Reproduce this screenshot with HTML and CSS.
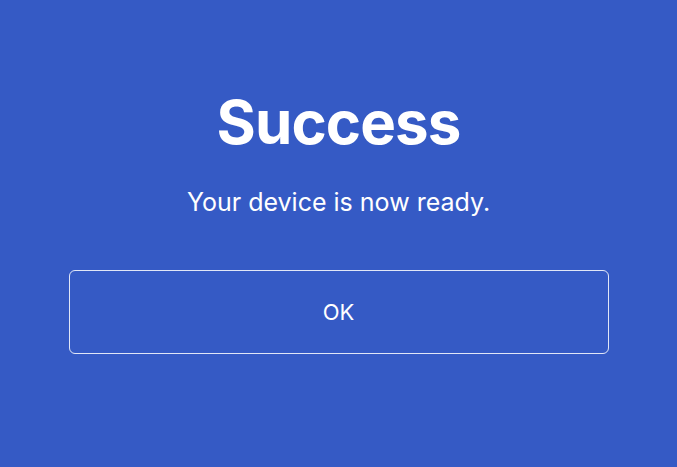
FILE: index.html
```html
<!DOCTYPE html>
<html>
<head>
<meta charset="utf-8">
<link rel="stylesheet" href="styles.css">
</head>
<body>
<main class="dialog">
  <h1 class="title">Success</h1>
  <p class="message">Your device is now ready.</p>
  <button class="ok-button">OK</button>
</main>
</body>
</html>
```
FILE: styles.css
```css
html, body {
  margin: 0;
  padding: 0;
  height: 100%;
}
body {
  background: #355ac5;
  color: #ffffff;
  font-family: Inter, "Noto Sans", sans-serif;
  display: flex;
  justify-content: center;
}
.dialog {
  width: 540px;
  display: flex;
  flex-direction: column;
  align-items: stretch;
  padding-top: 84px;
}
.title {
  margin: 0;
  font-size: 60px;
  font-weight: 700;
  line-height: 76px;
  text-align: center;
  letter-spacing: -0.9px;
}
.message {
  margin: 27px 0 0 0;
  font-size: 25px;
  line-height: 30px;
  text-align: center;
}
.ok-button {
  margin-top: 53px;
  height: 84px;
  background: transparent;
  border: 1px solid rgba(255,255,255,0.85);
  border-radius: 6px;
  color: #ffffff;
  font-family: Inter, "Noto Sans", sans-serif;
  font-size: 22px;
}
```
